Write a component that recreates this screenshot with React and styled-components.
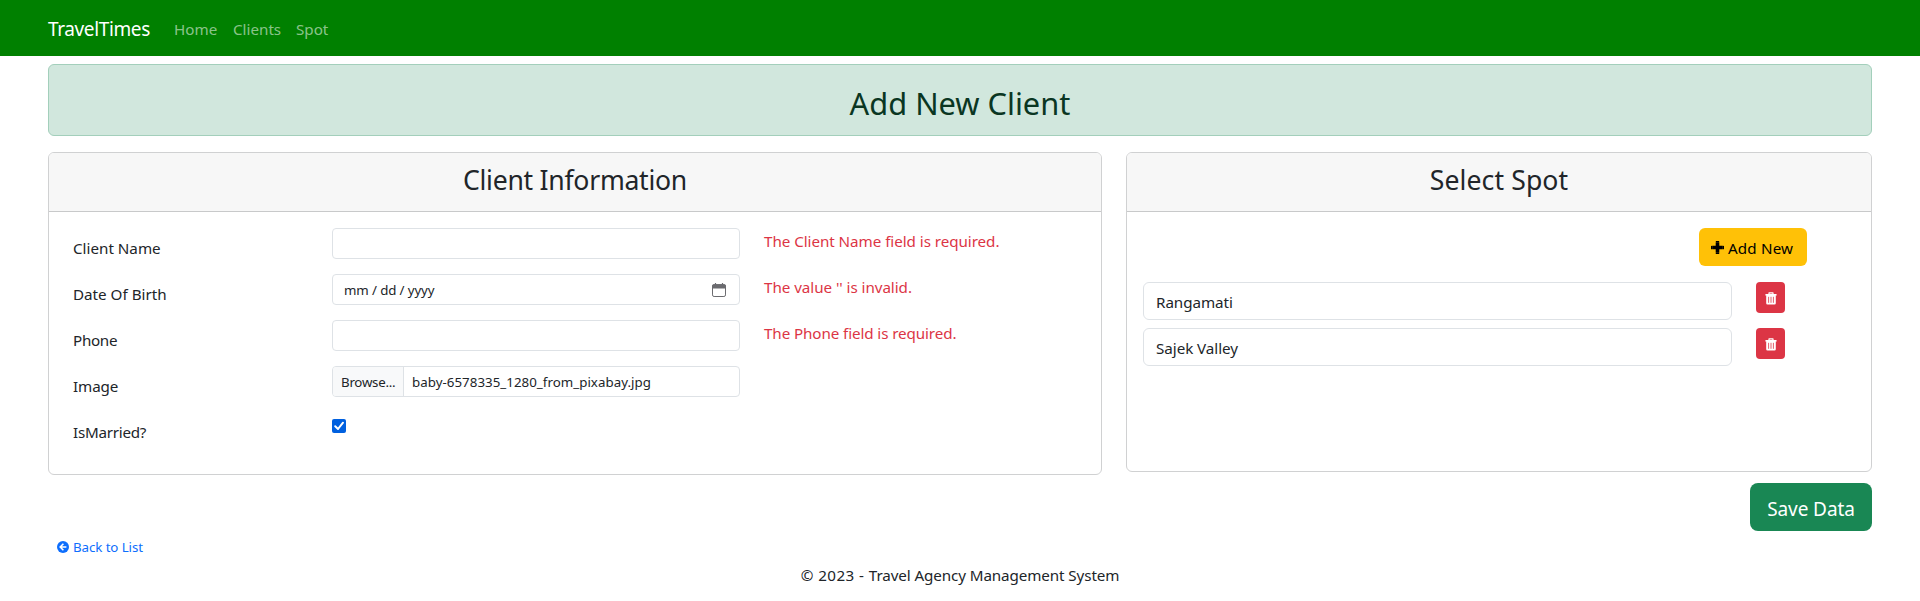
import React from "react";
import styled, { createGlobalStyle, css } from "styled-components";

const Global = createGlobalStyle`
  *, *::before, *::after { box-sizing: border-box; }
  body {
    margin: 0;
    background: #fff;
    color: #212529;
    font-family: "Noto Sans", sans-serif;
    font-size: 15.2px;
    line-height: 24px;
  }
  h2, h3, p { margin: 0; font-weight: 400; }
`;

const T = styled.span`
  letter-spacing: ${(p) => p.$ls || 0}px;
  white-space: nowrap;
`;

const Navbar = styled.nav`
  display: flex;
  align-items: center;
  height: 56px;
  padding: 2px 48px 0;
  background: #008000;
`;
const Brand = styled.a`
  color: #fff;
  font-size: 19px;
  line-height: 30px;
  width: 118px;
`;
const NavLink = styled.a`
  color: rgba(255, 255, 255, 0.55);
  padding: 8px;
  width: ${(p) => p.$w}px;
`;

const Main = styled.main`
  padding: 8px 48px 0;
`;
const Alert = styled.div`
  height: 72px;
  padding: 19px 16px 0;
  border: 1px solid #a3cfbb;
  border-radius: 6px;
  background: #d1e7dd;
  color: #0a3622;
  text-align: center;
`;
const AlertTitle = styled.h2`
  font-size: 30.8px;
  line-height: 38.4px;
`;
const Columns = styled.div`
  display: grid;
  grid-template-columns: 1054px 746px;
  gap: 24px;
  align-items: start;
  margin-top: 16px;
`;
const Card = styled.section`
  height: ${(p) => p.$h}px;
  border: 1px solid #d0d1d2;
  border-radius: 6px;
  overflow: hidden;
`;
const CardHeader = styled.header`
  height: 59px;
  padding: 11px 16px 0;
  background: #f7f7f7;
  border-bottom: 1px solid #c8c9ca;
  text-align: center;
`;
const CardTitle = styled.h3`
  font-size: 26.6px;
  line-height: 33.6px;
`;
const FormBody = styled.div`
  padding: 16px 12px 16px 24px;
`;
const FormRow = styled.div`
  display: grid;
  grid-template-columns: 259px 408px 1fr;
  height: 38px;
  margin-bottom: 8px;
`;
const Label = styled.label`
  padding: 8px 0 6px;
`;
const ErrorText = styled.span`
  padding: 1px 0 0 24px;
  color: #dc3545;
`;
const Control = styled.div`
  display: flex;
  align-items: center;
  height: 31px;
  border: 1px solid #dee2e6;
  border-radius: 4px;
  overflow: hidden;
  font-size: 13.3px;
  line-height: 21px;
  & > ${T} { padding-top: 2px; }
  ${(p) => p.$date && css`
    justify-content: space-between;
    padding: 0 13px 0 11px;
  `}
`;
const BrowseButton = styled.span`
  display: flex;
  align-items: center;
  width: 71px;
  height: 29px;
  padding: 2px 0 0 8px;
  background: #f8f9fa;
  border-right: 1px solid #dee2e6;
  margin-right: 8px;
`;
const Check = styled.span`
  display: flex;
  width: 14px;
  height: 14px;
  margin-top: 7px;
  border-radius: 2px;
  background: #0060df;
`;

const SpotBody = styled.div`
  padding: 16px;
`;
const AddButton = styled.button`
  display: flex;
  align-items: center;
  gap: 4px;
  width: 108px;
  height: 38px;
  margin: 0 0 16px 556px;
  padding: 0 0 0 12px;
  border: 0;
  border-radius: 6px;
  background: #ffc107;
  color: #000;
  font: inherit;
  & > ${T} { padding-top: 2px; }
`;
const SpotRow = styled.div`
  display: flex;
  gap: 24px;
  margin-bottom: 8px;
`;
const SpotSelect = styled.div`
  width: 589px;
  height: 38px;
  padding: 7px 12px 5px;
  border: 1px solid #dee2e6;
  border-radius: 6px;
`;
const DeleteButton = styled.button`
  display: flex;
  align-items: center;
  justify-content: center;
  width: 29px;
  height: 31px;
  padding: 1px 0 0;
  border: 0;
  border-radius: 4px;
  background: #dc3545;
  color: #fff;
`;
const Actions = styled.div`
  display: flex;
  justify-content: flex-end;
  margin-top: 8px;
`;
const SaveButton = styled.button`
  width: 122px;
  height: 48px;
  padding: 4px 0 0;
  border: 0;
  border-radius: 8px;
  background: #198754;
  color: #fff;
  font: inherit;
  font-size: 19px;
`;
const BackLink = styled.a`
  display: flex;
  align-items: center;
  gap: 4px;
  height: 21px;
  margin: 5px 0 0 9px;
  color: #0d6efd;
  font-size: 13.3px;
`;
const Footer = styled.footer`
  margin-top: 6px;
  text-align: center;
`;

const CalendarIcon = () => (
  <svg width="14" height="14" viewBox="0 0 14 14">
    <rect x="0.5" y="1.7" width="13" height="11.8" rx="1.6" fill="none" stroke="#6b6b6f" />
    <path d="M0 5.6V3q0-1.8 1.8-1.8h10.4Q14 1.2 14 3v2.6z" fill="#6b6b6f" />
    <path d="M3.5 0v3M10.5 0v3" stroke="#6b6b6f" strokeWidth="1.2" />
  </svg>
);
const TickIcon = () => (
  <svg width="14" height="14" viewBox="0 0 14 14">
    <path d="M3.2 7.3L6 10l5-6.3" fill="none" stroke="#fff" strokeWidth="2" strokeLinecap="round" strokeLinejoin="round" />
  </svg>
);
const PlusIcon = () => (
  <svg width="13" height="13" viewBox="0 0 13 13">
    <path d="M6.5 1.2v10.6M1.2 6.5h10.6" stroke="currentColor" strokeWidth="3.6" />
    <path d="M5.3.6h2.4M5.3 12.4h2.4M.6 5.3v2.4M12.4 5.3v2.4" stroke="currentColor" strokeWidth="1.2" strokeLinecap="round" />
  </svg>
);
const TrashIcon = () => (
  <svg width="12" height="13" viewBox="0 0 12 13">
    <path d="M4 2V.9h4V2" fill="none" stroke="currentColor" strokeWidth="1.2" strokeLinejoin="round" />
    <path d="M.3 3.4V2.6Q.3 2 1 2h10q.7 0 .7.6v.8zM1.2 3h9.6v8.2q0 1.3-1.3 1.3h-7q-1.3 0-1.3-1.3z" fill="currentColor" />
    <path d="M3.6 4.8v6M6 4.8v6M8.4 4.8v6" stroke="#dc3545" strokeWidth="0.8" />
  </svg>
);
const BackIcon = () => (
  <svg width="12" height="12" viewBox="0 0 12 12">
    <circle cx="6" cy="6" r="6" fill="currentColor" />
    <path d="M6.4 2.8L3.2 6l3.2 3.2M3.4 6h6" fill="none" stroke="#fff" strokeWidth="1.6" />
  </svg>
);

const spots = ["Rangamati", "Sajek Valley"];

export default function App() {
  return (
    <>
      <Global />
      <Navbar>
        <Brand><T $ls={-0.38}>TravelTimes</T></Brand>
        <NavLink $w={59}><T>Home</T></NavLink>
        <NavLink $w={63}><T>Clients</T></NavLink>
        <NavLink $w={50}><T>Spot</T></NavLink>
      </Navbar>
      <Main>
        <Alert><AlertTitle><T>Add New Client</T></AlertTitle></Alert>
        <Columns>
          <Card $h={323}>
            <CardHeader><CardTitle><T $ls={-0.27}>Client Information</T></CardTitle></CardHeader>
            <FormBody>
              <FormRow>
                <Label><T>Client Name</T></Label>
                <Control />
                <ErrorText><T $ls={-0.05}>The Client Name field is required.</T></ErrorText>
              </FormRow>
              <FormRow>
                <Label><T>Date Of Birth</T></Label>
                <Control $date><T $ls={-0.12}>mm / dd / yyyy</T><CalendarIcon /></Control>
                <ErrorText><T $ls={-0.05}>The value '' is invalid.</T></ErrorText>
              </FormRow>
              <FormRow>
                <Label><T $ls={-0.3}>Phone</T></Label>
                <Control />
                <ErrorText><T $ls={-0.1}>The Phone field is required.</T></ErrorText>
              </FormRow>
              <FormRow>
                <Label><T $ls={-0.1}>Image</T></Label>
                <Control>
                  <BrowseButton><T $ls={-0.25}>Browse...</T></BrowseButton>
                  <T $ls={0.04}>baby-6578335_1280_from_pixabay.jpg</T>
                </Control>
              </FormRow>
              <FormRow>
                <Label><T $ls={-0.25}>IsMarried?</T></Label>
                <Check><TickIcon /></Check>
              </FormRow>
            </FormBody>
          </Card>
          <Card $h={320}>
            <CardHeader><CardTitle><T $ls={0.1}>Select Spot</T></CardTitle></CardHeader>
            <SpotBody>
              <AddButton><PlusIcon /><T $ls={0.15}>Add New</T></AddButton>
              {spots.map((name) => (
                <SpotRow key={name}>
                  <SpotSelect><T $ls={-0.05}>{name}</T></SpotSelect>
                  <DeleteButton><TrashIcon /></DeleteButton>
                </SpotRow>
              ))}
            </SpotBody>
          </Card>
        </Columns>
        <Actions><SaveButton><T $ls={-0.1}>Save Data</T></SaveButton></Actions>
        <BackLink><BackIcon /><T $ls={-0.08}>Back to List</T></BackLink>
      </Main>
      <Footer><T $ls={0.45}>© 2023 - </T><T $ls={-0.1}>Travel Agency Management System</T></Footer>
    </>
  );
}
